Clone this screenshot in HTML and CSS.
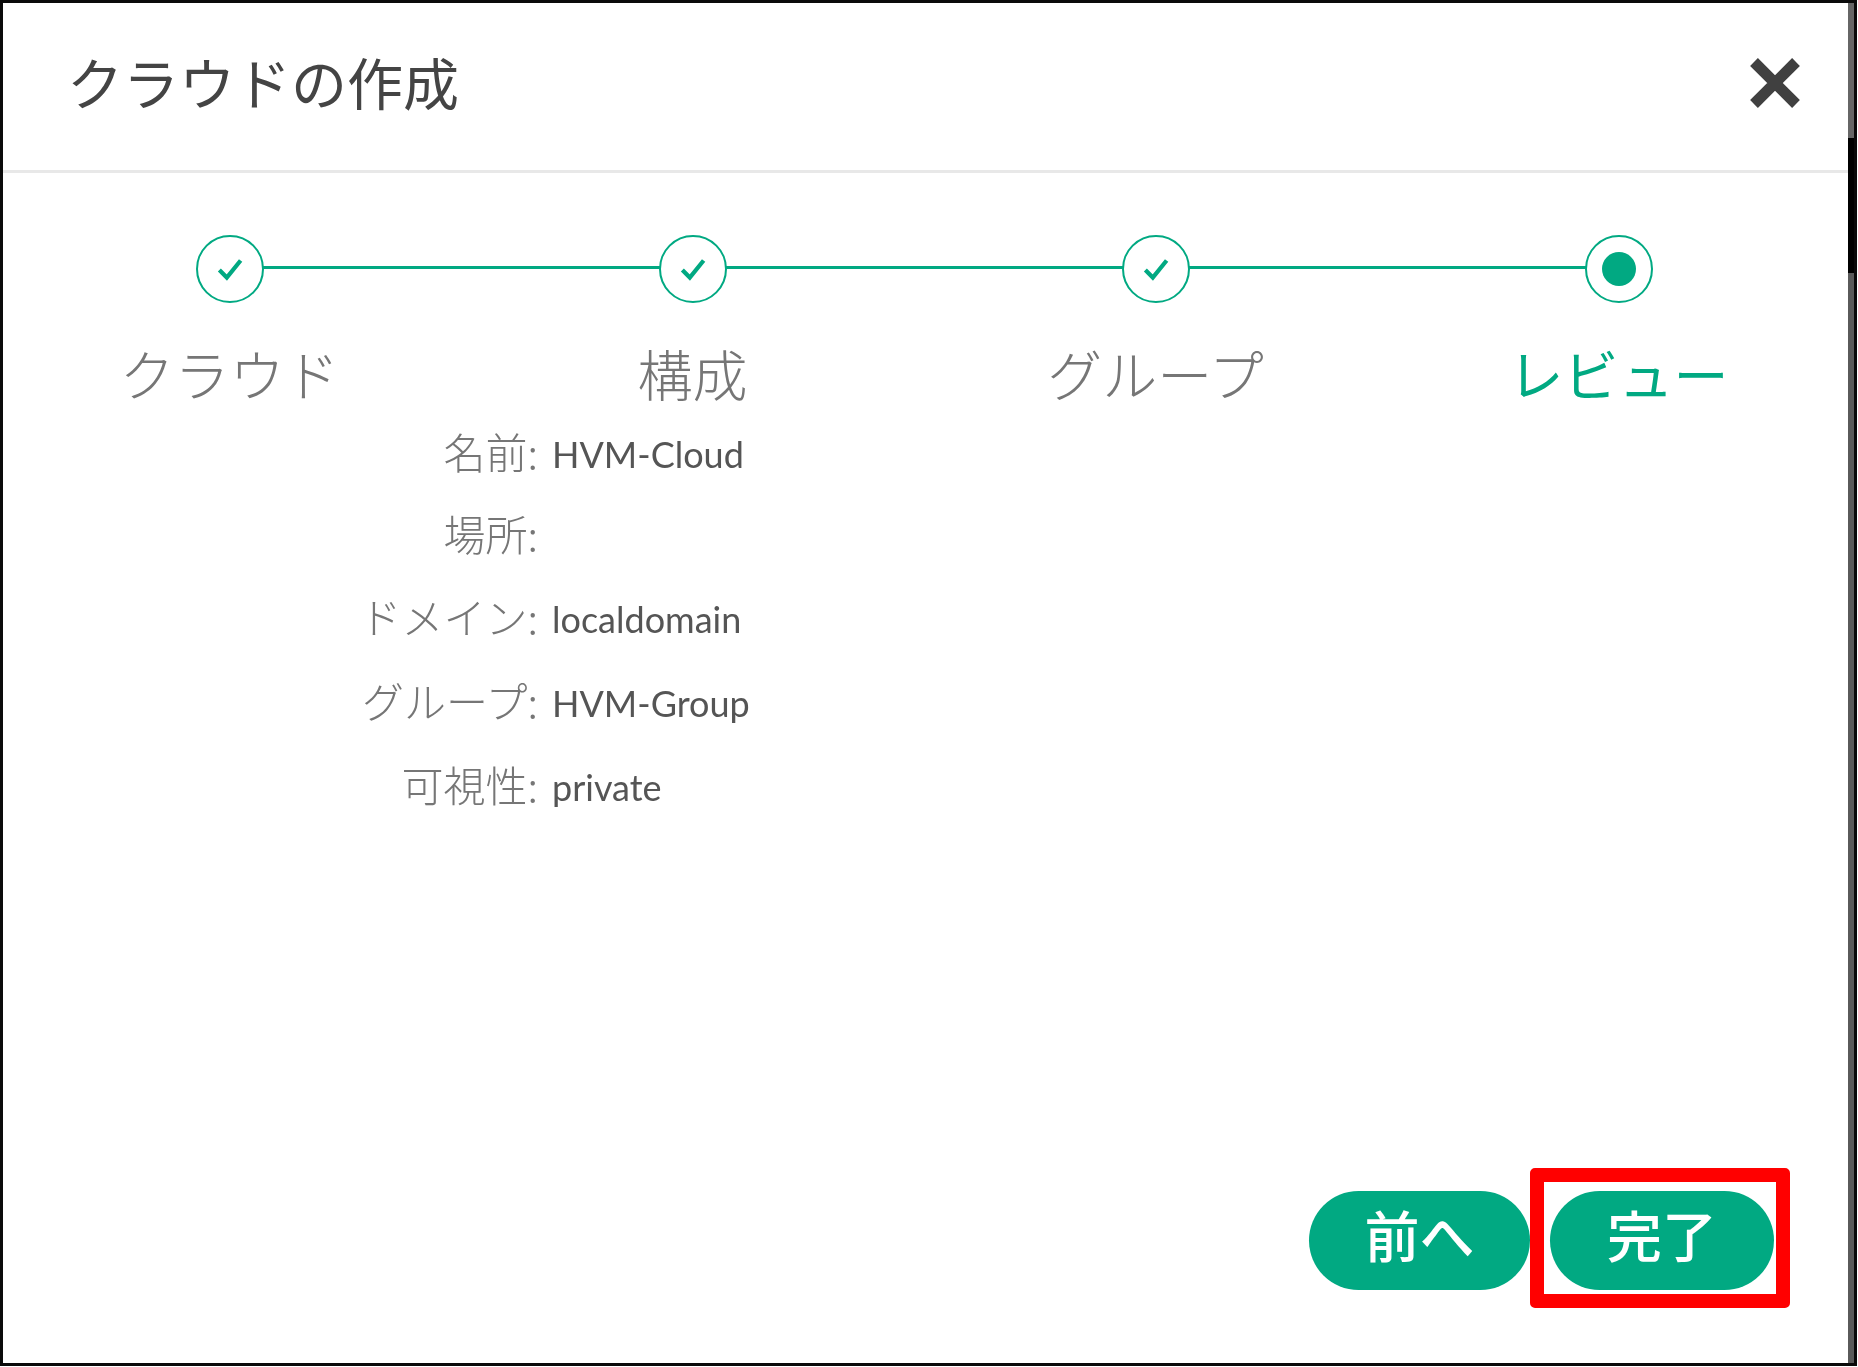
FILE: index.html
```html
<!DOCTYPE html>
<html lang="ja">
<head>
<meta charset="utf-8">
<title>クラウドの作成</title>
<link rel="stylesheet" href="styles.css">
</head>
<body>
<div class="dialog">
  <header class="dialog-header">
    <h1 class="dialog-title">クラウドの作成</h1>
    <svg class="close-icon" viewBox="0 0 52 52" aria-label="閉じる"><path d="M5 5 L47 47 M47 5 L5 47"/></svg>
  </header>
  <ol class="stepper">
    <li class="step step-done">
      <span class="step-mark"><svg class="check" viewBox="0 0 32 32"><path d="M6 17 L13 24 L26 8"/></svg></span>
      <span class="step-label">クラウド</span>
    </li>
    <li class="step step-done">
      <span class="step-mark"><svg class="check" viewBox="0 0 32 32"><path d="M6 17 L13 24 L26 8"/></svg></span>
      <span class="step-label">構成</span>
    </li>
    <li class="step step-done">
      <span class="step-mark"><svg class="check" viewBox="0 0 32 32"><path d="M6 17 L13 24 L26 8"/></svg></span>
      <span class="step-label">グループ</span>
    </li>
    <li class="step step-current">
      <span class="step-mark"><span class="dot"></span></span>
      <span class="step-label">レビュー</span>
    </li>
  </ol>
  <dl class="summary">
    <dt>名前:</dt><dd>HVM-Cloud</dd>
    <dt>場所:</dt><dd></dd>
    <dt>ドメイン:</dt><dd>localdomain</dd>
    <dt>グループ:</dt><dd>HVM-Group</dd>
    <dt>可視性:</dt><dd>private</dd>
  </dl>
  <footer class="dialog-footer">
    <button class="btn btn-back" type="button">前へ</button>
    <span class="btn-wrap">
      <button class="btn btn-finish" type="button">完了</button>
      <span class="highlight"></span>
    </span>
  </footer>
</div>
</body>
</html>
```
FILE: styles.css
```css
html, body {
  margin: 0;
  padding: 0;
  background: #fff;
}
body {
  width: 1858px;
  height: 1367px;
  overflow: hidden;
  font-family: "Noto Sans CJK JP", "Noto Sans", sans-serif;
}
.dialog {
  position: relative;
  box-sizing: border-box;
  width: 1857px;
  height: 1366px;
  display: flex;
  flex-direction: column;
  background: #fff;
  border: 3px solid #0a0a0a;
  filter: blur(0.6px);
}
.dialog::after {
  content: "";
  position: absolute;
  top: 0;
  right: 0;
  bottom: 0;
  width: 6px;
  background: linear-gradient(to bottom, #666 0 135px, #000 135px 270px, #5a5a5a 270px);
}
.dialog-header {
  box-sizing: border-box;
  height: 170px;
  flex: none;
  display: flex;
  align-items: center;
  justify-content: space-between;
  padding: 0 53px 0 64px;
  border-bottom: 3px solid #e8e8e8;
}
.dialog-title {
  margin: -1px 0 10px;
  font-size: 56px;
  font-weight: 400;
  color: #444;
  line-height: 1.2;
}
.close-icon {
  width: 52px;
  height: 52px;
  margin-bottom: 8px;
  fill: none;
  stroke: #404040;
  stroke-width: 11;
}
.stepper {
  list-style: none;
  margin: 62px 0 0 -5px;
  padding: 0;
  width: 1852px;
  display: grid;
  grid-template-columns: repeat(4, 1fr);
}
.step {
  position: relative;
  display: flex;
  flex-direction: column;
  align-items: center;
}
.step-mark {
  box-sizing: border-box;
  width: 68px;
  height: 68px;
  border: 2.5px solid #01a982;
  border-radius: 50%;
  display: flex;
  align-items: center;
  justify-content: center;
  background: #fff;
}
.step:not(:last-child)::after {
  content: "";
  position: absolute;
  top: 31px;
  left: calc(50% + 33px);
  width: calc(100% - 66px);
  height: 3px;
  background: #01a982;
}
.check {
  width: 34px;
  height: 34px;
  fill: none;
  stroke: #01a982;
  stroke-width: 4;
}
.dot {
  width: 34px;
  height: 34px;
  border-radius: 50%;
  background: #01a982;
}
.step-label {
  margin-top: 37px;
  font-size: 55px;
  line-height: 64px;
  font-weight: 300;
  color: #767676;
}
.step-current .step-label {
  color: #01a982;
  font-weight: 400;
}
.summary {
  margin: 9px 0 0;
  display: grid;
  grid-template-columns: 535px auto;
  grid-template-rows: 81px 84px 81px 87px 82px;
  column-gap: 14px;
  align-items: center;
  justify-content: start;
  font-size: 42px;
}
.summary dt {
  margin-bottom: 7px;
  text-align: right;
  font-weight: 300;
  color: #767676;
}
.summary dd {
  margin: 0;
  font-family: "Lato", "Noto Sans", sans-serif;
  font-size: 36px;
  color: #555;
}
.dialog-footer {
  margin-top: auto;
  display: flex;
  justify-content: flex-end;
  align-items: center;
  gap: 20px;
  padding: 0 80px 73px 0;
}
.btn-wrap {
  position: relative;
  display: flex;
}
.btn {
  height: 99px;
  border: 0;
  border-radius: 50px;
  background: #01a982;
  color: #fff;
  font-family: inherit;
  font-size: 55px;
  font-weight: 500;
  padding: 0 0 15px;
}
.btn-back {
  width: 221px;
}
.btn-finish {
  width: 224px;
}
.highlight {
  position: absolute;
  top: -23px;
  left: -20px;
  right: -16px;
  bottom: -18px;
  border: 14px solid #ff0000;
  border-radius: 5px;
}
```
